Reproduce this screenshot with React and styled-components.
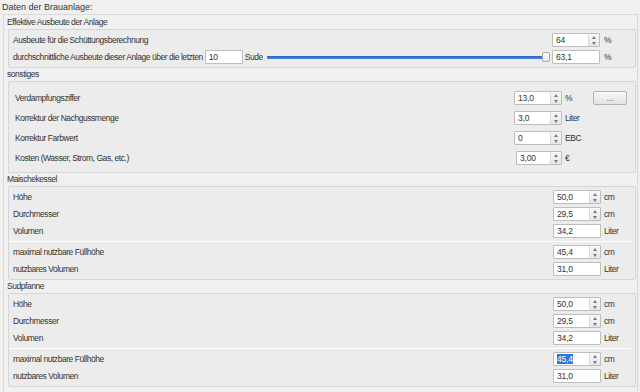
import React from 'react';
import styled, { createGlobalStyle } from 'styled-components';

const GlobalStyle = createGlobalStyle`
  html, body {
    margin: 0;
    padding: 0;
    background: #f0f0f0;
  }
  body {
    font-family: "Liberation Sans", Arial, sans-serif;
    font-size: 8.5px;
    letter-spacing: -0.45px;
    color: #333333;
  }
`;

const Page = styled.div`
  width: 640px;
  height: 392px;
  overflow: hidden;
  box-sizing: border-box;
  padding: 0 2px 0 3px;
`;

const PageTitle = styled.div`
  height: 14px;
  line-height: 14px;
  margin-left: -1px;
  font-size: 9px;
  letter-spacing: 0;
`;

const Frame = styled.div`
  border: 1px solid #d9d9d9;
  border-bottom: none;
  padding: 1px 1px 0 4px;
  height: 400px;
`;

const SectionTitle = styled.div`
  height: 13px;
  line-height: 13px;
  margin-left: -1px;
`;

const GroupBox = styled.div`
  display: flex;
  flex-direction: column;
  gap: ${p => p.$gap}px;
  padding: ${p => p.$pt}px 0 ${p => p.$pb}px;
  border: 1px solid #d6d6d6;
  border-radius: 2px;
  background: #ececec;
`;

const Row = styled.div`
  display: flex;
  align-items: center;
  height: 14px;
  padding-left: ${p => p.$pl || 4}px;
  padding-right: ${p => p.$pr || 0}px;
`;

const Label = styled.span`
  flex: ${p => (p.$grow ? 1 : 'none')};
  white-space: nowrap;
`;

const Field = styled.div`
  display: flex;
  box-sizing: border-box;
  flex: none;
  width: ${p => p.$w || 48}px;
  height: 14px;
  margin-left: ${p => p.$ml || 0}px;
  background: #fff;
  border: 1px solid #bdbdbd;
  border-radius: 1px;
`;

const FieldText = styled.span`
  flex: 1;
  padding-left: 3px;
  line-height: 12px;
  letter-spacing: -0.2px;
  color: #333;
`;

const Selected = styled.span`
  background: #3278d6;
  color: #fff;
`;

const Spinner = styled.div`
  width: 10px;
  display: flex;
  flex-direction: column;
  border-left: 1px solid #dadada;
  background: linear-gradient(#f8f8f8, #e7e7e7);
`;

const Arrow = styled.span`
  flex: 1;
  display: flex;
  align-items: center;
  justify-content: center;
  &::after {
    content: '';
    border-left: 2px solid transparent;
    border-right: 2px solid transparent;
    ${p => (p.$down ? 'border-top' : 'border-bottom')}: 3px solid #7a7a7a;
  }
`;

const Unit = styled.span`
  flex: none;
  width: ${p => p.$w}px;
  margin-left: ${p => p.$ml || 2}px;
  padding-left: 1px;
  box-sizing: border-box;
  white-space: nowrap;
`;

const Slider = styled.div`
  flex: 1;
  display: flex;
  align-items: center;
  height: 12px;
  margin-left: 4px;
`;

const Groove = styled.div`
  flex: 1;
  height: 3px;
  background: #3d7edb;
  border-top: 1px solid #2e66b8;
  box-sizing: border-box;
  border-radius: 1px;
`;

const Handle = styled.div`
  flex: none;
  width: 8px;
  height: 10px;
  margin-left: -3px;
  box-sizing: border-box;
  border: 1px solid #a9a9a9;
  border-radius: 2px;
  background: linear-gradient(#ffffff, #e6e6e6);
`;

const DotsButton = styled.button`
  flex: none;
  width: 34px;
  height: 14px;
  padding: 0;
  border: 1px solid #b2b2b2;
  border-radius: 2px;
  background: linear-gradient(#f7f7f7, #e3e3e3);
  font: inherit;
  color: #666;
  line-height: 10px;
`;

const Spacer = styled.span`
  flex: none;
  width: ${p => p.$w}px;
`;

const Separator = styled.div`
  height: 1px;
  margin-right: 4px;
  background: #ffffff;
`;

function SpinBox({ value, spin = true, selected, w, ml }) {
  return (
    <Field $w={w} $ml={ml}>
      <FieldText>{selected ? <Selected>{value}</Selected> : value}</FieldText>
      {spin && (
        <Spinner>
          <Arrow />
          <Arrow $down />
        </Spinner>
      )}
    </Field>
  );
}

const sonstiges = [
  { label: 'Verdampfungsziffer', value: '13,0', unit: '%', button: true },
  { label: 'Korrektur der Nachgussmenge', value: '3,0', unit: 'Liter' },
  { label: 'Korrektur Farbwert', value: '0', unit: 'EBC' },
  { label: 'Kosten (Wasser, Strom, Gas, etc.)', value: '3,00', unit: '€', w: 46 },
];

function Vessel({ title, selectFill }) {
  const top = [
    { label: 'Höhe', value: '50,0', unit: 'cm', spin: true },
    { label: 'Durchmesser', value: '29,5', unit: 'cm', spin: true },
    { label: 'Volumen', value: '34,2', unit: 'Liter', spin: false },
  ];
  const bottom = [
    { label: 'maximal nutzbare Füllhöhe', value: '45,4', unit: 'cm', spin: true, selected: selectFill },
    { label: 'nutzbares Volumen', value: '31,0', unit: 'Liter', spin: false },
  ];
  const renderRow = r => (
    <Row key={r.label}>
      <Label $grow>{r.label}</Label>
      <SpinBox value={r.value} spin={r.spin} selected={r.selected} />
      <Unit $w={32}>{r.unit}</Unit>
    </Row>
  );
  return (
    <>
      <SectionTitle>{title}</SectionTitle>
      <GroupBox $gap={3} $pt={3} $pb={3}>
        {top.map(renderRow)}
        <Separator />
        {bottom.map(renderRow)}
      </GroupBox>
    </>
  );
}

export default function App() {
  return (
    <Page>
      <GlobalStyle />
      <PageTitle>Daten der Brauanlage:</PageTitle>
      <Frame>
        <SectionTitle>Effektive Ausbeute der Anlage</SectionTitle>
        <GroupBox $gap={3} $pt={3} $pb={3}>
          <Row>
            <Label $grow>Ausbeute für die Schüttungsberechnung</Label>
            <SpinBox value="64" />
            <Unit $w={32} $ml={3}>%</Unit>
          </Row>
          <Row>
            <Label>durchschnittliche Ausbeute dieser Anlage über die letzten</Label>
            <SpinBox value="10" spin={false} w={38} ml={2} />
            <Label style={{ marginLeft: 2 }}>Sude</Label>
            <Slider>
              <Groove />
              <Handle />
            </Slider>
            <SpinBox value="63,1" spin={false} ml={2} />
            <Unit $w={32} $ml={3}>%</Unit>
          </Row>
        </GroupBox>

        <SectionTitle>sonstiges</SectionTitle>
        <GroupBox $gap={6} $pt={9} $pb={7}>
          {sonstiges.map(r => (
            <Row key={r.label} $pl={6} $pr={8}>
              <Label $grow>{r.label}</Label>
              <SpinBox value={r.value} w={r.w} />
              <Unit $w={29}>{r.unit}</Unit>
              {r.button ? <DotsButton>...</DotsButton> : <Spacer $w={34} />}
            </Row>
          ))}
        </GroupBox>

        <Vessel title="Maischekessel" />
        <Vessel title="Sudpfanne" selectFill />
      </Frame>
    </Page>
  );
}
